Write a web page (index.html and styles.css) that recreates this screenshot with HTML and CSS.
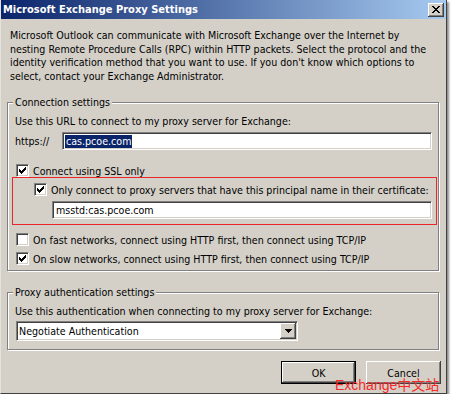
FILE: index.html
```html
<!DOCTYPE html>
<html>
<head>
<meta charset="utf-8">
<link rel="stylesheet" href="styles.css">
</head>
<body>
<div class="window">
  <div class="titlebar">
    <span class="title">Microsoft Exchange Proxy Settings</span>
    <span class="close"><svg width="8" height="7" viewBox="0 0 8 7" shape-rendering="crispEdges"><path d="M0 0h2v1h1v1h2v-1h1v-1h2v1h-1v1h-1v1h-1v1h1v1h1v1h1v1h-2v-1h-1v-1h-2v1h-1v1h-2v-1h1v-1h1v-1h1v-1h-1v-1h-1v-1h-1z" fill="#000"/></svg></span>
  </div>
  <div class="content">
    <p class="intro">Microsoft Outlook can communicate with Microsoft Exchange over the Internet by nesting Remote Procedure Calls (RPC) within HTTP packets. Select the protocol and the identity verification method that you want to use. If you don't know which options to select, contact your Exchange Administrator.</p>

    <div class="group group-conn">
      <div class="legend">Connection settings</div>
      <div class="label">Use this URL to connect to my proxy server for Exchange:</div>
      <div class="url-row">
        <span>https://</span>
        <div class="field field-url"><span class="selected">cas.pcoe.com</span></div>
      </div>
      <div class="check check-ssl">
        <span class="box"><svg width="7" height="7" viewBox="0 0 7 7" shape-rendering="crispEdges"><path d="M0 2h1v1h1v1h1v-1h1v-1h1v-1h1v-1h1v3h-1v1h-1v1h-1v1h-1v1h-1v-1h-1v-1h-1z" fill="#000"/></svg></span>
        <span>Connect using SSL only</span>
      </div>
      <div class="highlight">
        <div class="check">
          <span class="box"><svg width="7" height="7" viewBox="0 0 7 7" shape-rendering="crispEdges"><path d="M0 2h1v1h1v1h1v-1h1v-1h1v-1h1v-1h1v3h-1v1h-1v1h-1v1h-1v1h-1v-1h-1v-1h-1z" fill="#000"/></svg></span>
          <span>Only connect to proxy servers that have this principal name in their certificate:</span>
        </div>
        <div class="field field-principal">msstd:cas.pcoe.com</div>
      </div>
      <div class="check check-fast">
        <span class="box"></span>
        <span>On fast networks, connect using HTTP first, then connect using TCP/IP</span>
      </div>
      <div class="check check-slow">
        <span class="box"><svg width="7" height="7" viewBox="0 0 7 7" shape-rendering="crispEdges"><path d="M0 2h1v1h1v1h1v-1h1v-1h1v-1h1v-1h1v3h-1v1h-1v1h-1v1h-1v1h-1v-1h-1v-1h-1z" fill="#000"/></svg></span>
        <span>On slow networks, connect using HTTP first, then connect using TCP/IP</span>
      </div>
    </div>

    <div class="group group-auth">
      <div class="legend">Proxy authentication settings</div>
      <div class="label">Use this authentication when connecting to my proxy server for Exchange:</div>
      <div class="combo">
        <span class="combo-value">Negotiate Authentication</span>
        <span class="combo-btn"><svg width="7" height="4" viewBox="0 0 7 4" shape-rendering="crispEdges"><path d="M0 0h7v1h-1v1h-1v1h-1v1h-1v-1h-1v-1h-1v-1h-1z" fill="#000"/></svg></span>
      </div>
    </div>

    <div class="buttons">
      <span class="btn btn-default"><span class="btn-face">OK</span></span>
      <span class="btn"><span class="btn-face">Cancel</span></span>
    </div>
  </div>
  <div class="watermark">Exchange中文站</div>
</div>
</body>
</html>
```

FILE: styles.css
```css
* { box-sizing: border-box; }

html, body {
  margin: 0;
  padding: 0;
  background: #ffffff;
}

body {
  font-family: "DejaVu Sans Condensed", "DejaVu Sans", sans-serif;
  font-size: 10.6px;
  color: #000;
}

.window {
  position: relative;
  width: 447px;
  height: 394px;
  background: #d4d0c8;
  border-left: 1px solid #e4e2dc;
  border-right: 1px solid #404040;
  border-bottom: 1px solid #404040;
  box-shadow: 2px 2px 2px rgba(0, 0, 0, 0.45);
}

.titlebar {
  height: 19px;
  display: flex;
  align-items: center;
  justify-content: space-between;
  padding: 0 2px 0 2px;
  background: linear-gradient(to right, #0a246a, #a6caf0);
}

.title {
  color: #fff;
  font-weight: bold;
  font-size: 11px;
  white-space: nowrap;
}

.close {
  width: 16px;
  height: 14px;
  display: flex;
  align-items: center;
  justify-content: center;
  background: #d4d0c8;
  box-shadow: inset -1px -1px #404040, inset 1px 1px #fff, inset -2px -2px #808080, inset 2px 2px #d4d0c8;
}

.content {
  padding-top: 10px;
}

.intro {
  margin: 0 0 0 9px;
  width: 425px;
  line-height: 13.6px;
}

.group {
  margin-left: 6px;
  width: 432px;
  border: 1px solid #808080;
  box-shadow: 1px 1px 0 #fff, inset 1px 1px 0 #fff;
  padding: 0 0 0 7px;
}

.group-conn {
  margin-top: 19px;
  padding-bottom: 5px;
}

.group-auth {
  margin-top: 21px;
  padding-bottom: 8px;
}

.legend {
  width: max-content;
  margin: -7px 0 0 -2px;
  padding: 0 2px;
  background: #d4d0c8;
  line-height: 13px;
}

.label {
  margin-top: 6px;
  line-height: 13px;
  white-space: nowrap;
}

.url-row {
  margin-top: 4px;
  display: grid;
  grid-template-columns: 47px 370px;
  align-items: center;
}

.field {
  height: 18px;
  background: #fff;
  border: 1px solid;
  border-color: #808080 #fff #fff #808080;
  box-shadow: inset 1px 1px #404040, inset -1px -1px #d4d0c8;
  padding: 1px 2px 0 3px;
  line-height: 14px;
  white-space: nowrap;
}

.field-url {
  padding-left: 2px;
}

.selected {
  display: inline-block;
  background: #0a246a;
  color: #fff;
  line-height: 13px;
  padding: 0 1px;
}

.check {
  display: flex;
  align-items: center;
  gap: 4px;
  height: 13px;
  white-space: nowrap;
}

.box {
  width: 13px;
  height: 13px;
  flex: none;
  display: flex;
  align-items: center;
  justify-content: center;
  background: #fff;
  border: 1px solid;
  border-color: #808080 #fff #fff #808080;
  box-shadow: inset 1px 1px #404040, inset -1px -1px #d4d0c8;
}

.check-ssl {
  margin-top: 14px;
  margin-left: 1px;
}

.highlight {
  margin-left: -3px;
  width: 425px;
  border: 1px solid #e8262b;
  padding: 5px 0 5px 21px;
}

.field-principal {
  margin-top: 5px;
  margin-left: 18px;
  width: 380px;
}

.check-fast {
  margin-top: 8px;
  margin-left: 1px;
}

.check-slow {
  margin-top: 6px;
  margin-left: 1px;
}

.combo {
  margin-top: 3px;
  margin-left: 1px;
  width: 282px;
  height: 20px;
  display: flex;
  background: #fff;
  border: 1px solid;
  border-color: #808080 #fff #fff #808080;
  box-shadow: inset 1px 1px #404040, inset -1px -1px #d4d0c8;
  padding: 1px;
}

.combo-value {
  flex: 1;
  padding-left: 1px;
  line-height: 16px;
}

.combo-btn {
  width: 16px;
  display: flex;
  align-items: center;
  justify-content: center;
  background: #d4d0c8;
  box-shadow: inset -1px -1px #404040, inset 1px 1px #fff, inset -2px -2px #808080, inset 2px 2px #d4d0c8;
}

.buttons {
  margin-top: 11px;
  display: flex;
  justify-content: flex-end;
  gap: 10px;
  padding-right: 5px;
}

.btn {
  width: 75px;
  height: 23px;
  display: flex;
}

.btn-face {
  flex: 1;
  display: flex;
  align-items: center;
  justify-content: center;
  background: #d4d0c8;
  box-shadow: inset -1px -1px #404040, inset 1px 1px #fff, inset -2px -2px #808080, inset 2px 2px #d4d0c8;
}

.btn-default {
  border: 1px solid #000;
}

.watermark {
  position: absolute;
  left: 334px;
  top: 377px;
  font-family: "Liberation Sans", "Noto Sans CJK SC", sans-serif;
  font-size: 14px;
  line-height: 16px;
  color: #f52a2a;
  white-space: nowrap;
}
```
